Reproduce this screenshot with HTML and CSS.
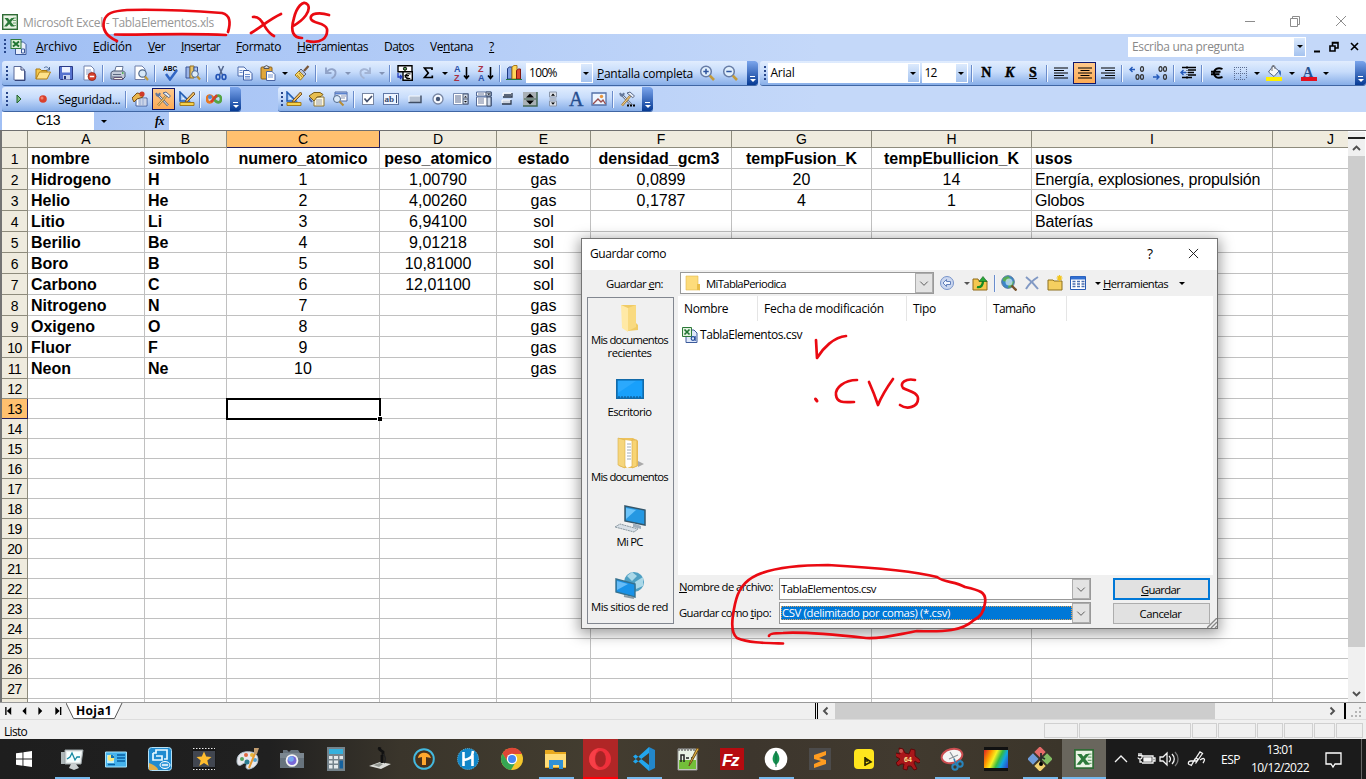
FILE: index.html
```html
<!DOCTYPE html>
<html lang="es">
<head>
<meta charset="utf-8">
<title>Microsoft Excel - TablaElementos.xls</title>
<link rel="stylesheet" href="styles.css">
</head>
<body>
<svg class="defs" width="0" height="0">
  <symbol id="excel" viewBox="0 0 16 16"><rect x=".7" y=".7" width="14.6" height="14.6" fill="#e9f3e4" stroke="#2f6b35" stroke-width="1.4"/><path d="M11 4h3M11 6.500h3M11 9h3M11 11.500h3" stroke="#6fa873"/><path d="M2.500 4h3.500l1.500 2L9.500 4h3L9 8l3.700 4.500H9L7.200 10l-2.200 2.500H2l3.700-4.500z" fill="#2c7a3a"/></symbol>
  <symbol id="book" viewBox="0 0 16 16"><path d="M5 3h8l2.500 2.500V15.500H5z" fill="#e8eefc" stroke="#3c5a9a"/><path d="M11 10h3v4h-3z" fill="none" stroke="#3c5a9a"/><rect x=".5" y=".5" width="10" height="9" fill="#d9ecd5" stroke="#2f7a3a"/><path d="M2.500 2.500l6 5M8.500 2.500l-6 5" stroke="#1e7430" stroke-width="1.900"/></symbol>
  <symbol id="new" viewBox="0 0 16 16"><path d="M3 1.500h7l3.500 3.500V15H3z" fill="#fff" stroke="#5a6a9a"/><path d="M10 1.500V5h3.500M4 15.500h10V6" fill="none" stroke="#35457a"/></symbol>
  <symbol id="open" viewBox="0 0 16 16"><path d="M1 14V4h4l1.500 1.500H12V8" fill="#f5c84c" stroke="#a97812"/><path d="M1 14l3.500-7H15.500L12 14z" fill="#ffe28a" stroke="#b07e14"/><path d="M9 3c2-2 4-1 5 1.500M14.500 2v3h-3" fill="none" stroke="#4c6894"/></symbol>
  <symbol id="save" viewBox="0 0 16 16"><path d="M1.500 1.500h13v13h-12l-1-1z" fill="#5672ce" stroke="#2a3b87"/><path d="M4 2h8v5.500H4z" fill="#edf2ff"/><path d="M5 10h7v4.500H5z" fill="#c9d4ee"/><path d="M6 11h2v3H6z" fill="#233477"/></symbol>
  <symbol id="perm" viewBox="0 0 16 16"><path d="M3 1h7l3 3v11H3z" fill="#fff" stroke="#7383ad"/><path d="M5 5h5M5 7h6M5 9h3" stroke="#8fa0c8"/><circle cx="11" cy="11.500" r="4" fill="#d5412c" stroke="#8d1d12" stroke-width=".7"/><path d="M8.800 11.500h4.400" stroke="#fff" stroke-width="1.500"/></symbol>
  <symbol id="print" viewBox="0 0 16 16"><path d="M4.500 7L6 1.500h7L12 7" fill="#fff" stroke="#66789b"/><path d="M1 7.500l2-1.500h10.500l1.500 1.500V12l-2 2H1z" fill="#c4cbd9" stroke="#46546e"/><path d="M3 9.500h8M2 12h10" stroke="#5a6780"/><path d="M4 12.500h8l1 2H3.500z" fill="#f1f1e2" stroke="#657"/><path d="M12 8h1.500" stroke="#3a3" stroke-width="1.500"/></symbol>
  <symbol id="preview" viewBox="0 0 16 16"><path d="M2 1h7l3 3v10.500H2z" fill="#fff" stroke="#6f80aa"/><circle cx="9.500" cy="8.500" r="3.700" fill="#d6e8f8" stroke="#536b8e" stroke-width="1.200"/><path d="M12 11.500l3 3.500" stroke="#c09a3a" stroke-width="2.200"/></symbol>
  <symbol id="spell" viewBox="0 0 16 16"><path d="M4 9l4 5.500 7-9.500" fill="none" stroke="#3166c4" stroke-width="2.500"/></symbol>
  <symbol id="research" viewBox="0 0 16 16"><path d="M1 2h4v11H1z" fill="#9ab4e8" stroke="#3b5596"/><path d="M5 1h4v12H5z" fill="#e6c56a" stroke="#937126"/><path d="M9 2h3.500v8H9z" fill="#a9c4f2" stroke="#3b5596"/><circle cx="10" cy="9" r="3.300" fill="#dcebfa" stroke="#4c668e"/><path d="M12.300 11.500l2.700 3" stroke="#be9030" stroke-width="2.200"/></symbol>
  <symbol id="cut" viewBox="0 0 16 16"><path d="M5.500 1l4 9M10.500 1l-4 9" stroke="#52658c" stroke-width="1.500"/><ellipse cx="5" cy="12" rx="1.900" ry="2.500" fill="none" stroke="#2353b4" stroke-width="1.600"/><ellipse cx="11" cy="12" rx="1.900" ry="2.500" fill="none" stroke="#2353b4" stroke-width="1.600"/></symbol>
  <symbol id="copy" viewBox="0 0 16 16"><path d="M1 2h6l2.500 2.500V11H1z" fill="#f4f8ff" stroke="#4f6dac"/><path d="M6.500 5.500H12l3 3V15H6.500z" fill="#f4f8ff" stroke="#3c5da4"/><path d="M2.500 5.500h3M2.500 7.500h3M8 9.500h5M8 11.500h5M8 13h5" stroke="#6f90d0"/></symbol>
  <symbol id="paste" viewBox="0 0 16 16"><rect x="1" y="2" width="11" height="12" rx="1" fill="#e0a63a" stroke="#8b611a"/><path d="M4 3.500V2L6.500.5 9 2v1.500z" fill="#cfd6e4" stroke="#555"/><path d="M6.500 6.500H12l3 3V15.500H6.500z" fill="#fff" stroke="#4b66a4"/><path d="M8 10h5M8 12h5" stroke="#7795d2"/></symbol>
  <symbol id="brush" viewBox="0 0 16 16"><path d="M14.500 1L10 6" stroke="#7a5738" stroke-width="2.200"/><path d="M7 4l5 5-2 2-5-5z" fill="#b9c3da" stroke="#566384"/><path d="M5 6l5 5-3.500 4L1 10z" fill="#f6d669" stroke="#9d7820"/><path d="M3 10l3 3M5 8l3 4" stroke="#b98e2c"/></symbol>
  <symbol id="undo" viewBox="0 0 16 16"><path d="M3 2.500V8h5.500M3.500 7.500C7 2 13 4 12.500 8.500 12.300 11 10.500 12.500 8.500 13.500" fill="none" stroke="#91a3c8" stroke-width="1.900"/></symbol>
  <symbol id="redo" viewBox="0 0 16 16"><path d="M13 2.500V8H7.500M12.500 7.500C9 2 3 4 3.500 8.500 3.700 11 5.500 12.500 7.500 13.500" fill="none" stroke="#a3b4d4" stroke-width="1.900"/></symbol>
  <symbol id="euroconv" viewBox="0 0 16 16"><path d="M1 .7h14v6H1zM6 6.700h9.300v8.600H6z" fill="#fff" stroke="#000" stroke-width="1.400"/><circle cx="8" cy="3.700" r="1.600" fill="#5fa457" stroke="#000"/><path d="M13.500 9c-4-1-5 1-5 2.300s1.500 3 4.800 2M7.500 10.500h4.500M7.500 12h4" fill="none" stroke="#000" stroke-width="1.200"/><path d="M1 8v4h3M3 10l2 2-2 2" fill="none" stroke="#2039bd" stroke-width="1.300"/></symbol>
  <symbol id="sigma" viewBox="0 0 16 16"><path d="M12 5V3H4.500L8.300 8 4.500 12.500h7.800V10.500" fill="none" stroke="#000" stroke-width="1.700"/></symbol>
  <symbol id="downarrow" viewBox="0 0 16 16"><path d="M12.500 2v11M10 10.500l2.500 3 2.500-3" fill="none" stroke="#000" stroke-width="1.600"/></symbol>
  <symbol id="chart" viewBox="0 0 16 16"><path d="M1.500 3.500l2-1.500h2.500v12H1.500z" fill="#7f9fe2" stroke="#1c3a83"/><path d="M6 2l2-1.500h3V14H6z" fill="#ffd75a" stroke="#a9781a"/><path d="M10.500 5.500l2-1.500h2V14h-4z" fill="#dd4930" stroke="#82180e"/><path d="M0 14.500h16" stroke="#274" stroke-width="1"/></symbol>
  <symbol id="zoomin" viewBox="0 0 16 16"><circle cx="7" cy="6.500" r="5.300" fill="#e1effc" stroke="#687da6" stroke-width="1.500"/><path d="M4.300 6.500h5.400M7 3.800v5.400" stroke="#2e549e" stroke-width="1.500"/><path d="M10.800 10.600L15 15" stroke="#c39b3c" stroke-width="2.600"/></symbol>
  <symbol id="zoomout" viewBox="0 0 16 16"><circle cx="7" cy="6.500" r="5.300" fill="#e1effc" stroke="#687da6" stroke-width="1.500"/><path d="M4.300 6.500h5.400" stroke="#2e549e" stroke-width="1.500"/><path d="M10.800 10.600L15 15" stroke="#c39b3c" stroke-width="2.600"/></symbol>
  <symbol id="left" viewBox="0 0 16 16"><path d="M1 3h14M1 5.500h10M1 8h14M1 10.500h10M1 13h14" stroke="#000" stroke-width="1.200"/></symbol>
  <symbol id="center" viewBox="0 0 16 16"><path d="M1 3h14M3.500 5.500h9M1 8h14M3.500 10.500h9M1 13h14" stroke="#000" stroke-width="1.200"/></symbol>
  <symbol id="right" viewBox="0 0 16 16"><path d="M1 3h14M5 5.500h10M1 8h14M5 10.500h10M1 13h14" stroke="#000" stroke-width="1.200"/></symbol>
  <symbol id="decinc" viewBox="0 0 16 16"><path d="M1 4.500h5M3.500 2L1 4.500 3.500 7" fill="none" stroke="#2359ba" stroke-width="1.400"/><g fill="none" stroke="#333" stroke-width="1.200"><ellipse cx="13" cy="4" rx="1.500" ry="2.300"/><ellipse cx="8.500" cy="12" rx="1.500" ry="2.300"/><ellipse cx="13" cy="12" rx="1.500" ry="2.300"/></g></symbol>
  <symbol id="decdec" viewBox="0 0 16 16"><path d="M1 12h6M4.500 9.500L7 12l-2.500 2.500" fill="none" stroke="#2359ba" stroke-width="1.400"/><g fill="none" stroke="#333" stroke-width="1.200"><ellipse cx="8.500" cy="4" rx="1.500" ry="2.300"/><ellipse cx="13" cy="4" rx="1.500" ry="2.300"/><ellipse cx="13" cy="12" rx="1.500" ry="2.300"/></g></symbol>
  <symbol id="indent" viewBox="0 0 16 16"><path d="M2 2.500h14M8 5h8M8 7.500h6M8 10h8M2 12.500h10" stroke="#000" stroke-width="1.400"/><path d="M1 7.500h5M3.500 5L1 7.500 3.500 10" fill="none" stroke="#2359ba" stroke-width="1.400"/><path d="M7 1v14" stroke="#222" stroke-dasharray="1 1"/></symbol>
  <symbol id="euro" viewBox="0 0 16 16"><path d="M13.500 4C8.500 1.800 5 4.500 5 8s3 6 8.500 4M2 6.800h9.500M2 9.300h8.500" fill="none" stroke="#000" stroke-width="1.900"/></symbol>
  <symbol id="borders" viewBox="0 0 16 16"><path d="M2 2.500h12M2 8.500h12M2 14.500h12M2.500 2v12M8.500 2v12M14.500 2v12" stroke="#5b6c90" stroke-dasharray="1 1"/></symbol>
  <symbol id="fill" viewBox="0 0 16 16"><path d="M7 1l6 5-5 5.500L2.500 7z" fill="#f4f6fb" stroke="#536282"/><path d="M6 6V1.500C6 0 9 0 9 2v2" fill="none" stroke="#777"/><path d="M12.500 5c3 0 3 3 2 6-1-2-2-3-2-6" fill="#3b6dbb"/><path d="M0 12h16v4H0z" fill="#ffef00"/></symbol>
  <symbol id="fontcolor" viewBox="0 0 16 16"><path d="M0 12h16v4H0z" fill="#e3101e"/></symbol>
  <symbol id="sec" viewBox="0 0 16 16"><path d="M4 7h11v8H4z" fill="#fff" stroke="#4662a0"/><path d="M6 9h8M6 11h8M6 13h8M8 8v7M11 8v7" stroke="#97abd2"/><path d="M0 7l5-5 5 1 1 3-6 2-3 3z" fill="#e9b64e" stroke="#785018"/><circle cx="10" cy="3" r="2.600" fill="#cf3a28"/></symbol>
  <symbol id="tools" viewBox="0 0 16 16"><path d="M3.500 4.500l9.500 10" stroke="#546481" stroke-width="2.400"/><path d="M3.500 4.500l9.500 10" stroke="#eef3fa"/><path d="M1 2l2 2 2-2M1 2c0 4 4 4 4 0" fill="none" stroke="#66799b" stroke-width="1.300"/><path d="M12 4L3 14.500" stroke="#a87c34" stroke-width="2.400"/><path d="M12 4L3 14.500" stroke="#f6d898"/><path d="M8 2l3-1 4.500 4-1.700 1.700L11 4.500z" fill="#e8edf5" stroke="#58698b"/></symbol>
  <symbol id="design" viewBox="0 0 16 16"><path d="M1 1l9 9H1z" fill="#a9cbf4" stroke="#205bb2" stroke-width="1.500"/><path d="M3.500 6v2h2z" fill="#fff"/><path d="M14.500 1L7 9l-1 2.500 2.500-1L16 3z" fill="#edbd60" stroke="#745022"/><path d="M1 11.500h14v3H1z" fill="#f6d24c" stroke="#a27a1d"/></symbol>
  <symbol id="script" viewBox="0 0 16 16"><path d="M8 8C5 3 1 4 1 8s4 5 7 0" fill="none" stroke="#e77621" stroke-width="2.700"/><path d="M8 8c3 5 7 4 7 0s-4-5-7 0" fill="none" stroke="#55a444" stroke-width="2.700"/><path d="M5 11l6-7" stroke="#d83d2c" stroke-width="2.500"/><circle cx="4" cy="6" r="2" fill="#4b88da"/></symbol>
  <symbol id="props" viewBox="0 0 16 16"><path d="M5 6h10v9H5z" fill="#fff8d9" stroke="#8c7534"/><path d="M7 9h6M7 11h6M7 13h6" stroke="#9aa2b8"/><path d="M0 5l5-3.500h6l3 2-2 2-4 .5-3 4z" fill="#e7be50" stroke="#785c19"/><path d="M0 7l3 4" stroke="#4a66a8" stroke-width="2"/></symbol>
  <symbol id="viewcode" viewBox="0 0 16 16"><path d="M3 1h12v9H3z" fill="#fff" stroke="#5169a0"/><path d="M3 2.500h12" stroke="#5b82ce" stroke-width="2"/><path d="M9 5h5M9 7h4" stroke="#8b96b4"/><circle cx="5" cy="8" r="3.500" fill="#dcebfa" stroke="#50698c"/><path d="M7.500 10.500l4 4" stroke="#b88d35" stroke-width="2"/></symbol>
  <symbol id="check" viewBox="0 0 16 16"><rect x="2.500" y="2.500" width="11" height="11" fill="#fff" stroke="#7786a3"/><path d="M4.500 7.500l2.500 3L12 5" fill="none" stroke="#44516e" stroke-width="1.700"/></symbol>
  <symbol id="field" viewBox="0 0 16 16"><rect x=".5" y="2.500" width="15" height="11" fill="#edf4ff" stroke="#6078a7"/><path d="M13.500 4v8" stroke="#35496f"/></symbol>
  <symbol id="button" viewBox="0 0 16 16"><rect x="2" y="5" width="12" height="6.500" fill="#b7c2d2"/><path d="M14 4.500V11.500H1.500" fill="none" stroke="#3f4d64" stroke-width="1.400"/><path d="M2 11V5h11" fill="none" stroke="#f8fbff"/></symbol>
  <symbol id="radio" viewBox="0 0 16 16"><circle cx="8" cy="8" r="5" fill="#f7faff" stroke="#7786a3" stroke-width="1.300"/><circle cx="8" cy="8" r="2.200" fill="#445574"/></symbol>
  <symbol id="listbox" viewBox="0 0 16 16"><path d="M.5 2.500h15v11H.5z" fill="#fff" stroke="#7a8fb6"/><path d="M2 5h6M2 7h6M2 9h6M2 11h6" stroke="#55678d"/><path d="M10 3h5v10h-5zM10 8h5" fill="#d3dcea" stroke="#4d5d79"/><path d="M11 6.500h3L12.500 5zM11 10h3l-1.500 1.500z" fill="#000"/></symbol>
  <symbol id="combo" viewBox="0 0 16 16"><path d="M.5 1h15v4H.5zM.5 6h15v9H.5z" fill="#fff" stroke="#526a99"/><path d="M2 3h6M2 8h6M2 10h6M2 12h6" stroke="#6e7d9e"/><path d="M10 1h5v4h-5zM11 6h4v9h-4z" fill="#d0daea" stroke="#44546e"/><path d="M11 2.500h3.500L12.800 4z" fill="#000"/></symbol>
  <symbol id="toggle" viewBox="0 0 16 16"><path d="M4 2h9v4H4zM3 9h9v4H3z" fill="#cbd3df"/><path d="M4 5V2h9M3 12V9h9" fill="none" stroke="#fff"/><path d="M13 2v4H4M12 9v4H3" fill="none" stroke="#2d384b" stroke-width="1.300"/><path d="M5 3h7v2H5z" fill="#59667a"/></symbol>
  <symbol id="spin" viewBox="0 0 16 16"><path d="M1 1h14v14H1z" fill="#a9b0b5"/><path d="M15 1v14H1" fill="none" stroke="#465" stroke-width="1.500"/><path d="M2 8h12" stroke="#465" stroke-width="1.200"/><path d="M4 6.500h8L8 2.500zM4 9.500h8l-4 4z"/></symbol>
  <symbol id="scroll" viewBox="0 0 16 16"><path d="M4.500 1h7v5h-7zM4.500 10h7v5h-7z" fill="#dbe0e8" stroke="#8a96aa"/><path d="M4.500 6.500h7v3h-7z" fill="#b2bccb"/><path d="M6 4.800h4L8 2.500zM6 11.500h4l-2 2.300z"/></symbol>
  <symbol id="image" viewBox="0 0 16 16"><path d="M1 2h14v12H1z" fill="#edf5ff" stroke="#5370a8" stroke-width="1.300"/><circle cx="10.500" cy="5.500" r="1.700" fill="#e8963f"/><path d="M2 13l5-5 3 3 2-2 2.500 4" fill="none" stroke="#994b4b" stroke-width="1.300"/></symbol>
  <symbol id="folder" viewBox="0 0 28 28"><path d="M5 1h15v18l2 2v5l-10 1z" fill="#f0cb66"/><path d="M5 1l7 3v24l-6-4z" fill="#ffe9a6"/><path d="M12 4l8-3v22l-8 4z" fill="#f9da80"/></symbol>
  <symbol id="smallfolder" viewBox="0 0 16 16"><path d="M1 1h12v13l2 1H1z" fill="#fddc7b" stroke="#e3b94d" stroke-width=".6"/><path d="M12 9h3v6h-3z" fill="#e8bd49"/></symbol>
  <symbol id="desktop" viewBox="0 0 28 20"><path d="M.8.800h26.400v18.400H.8z" fill="#18a0fb" stroke="#126aa9" stroke-width="1.600"/><path d="M2 14L20 2H2z" fill="#3db2ff" opacity=".5"/><path d="M2 18h24" stroke="#0b4f82" stroke-dasharray="2 1"/></symbol>
  <symbol id="docs" viewBox="0 0 28 32"><path d="M3 1h14l5 3v25l-5 2H8l-5-2z" fill="#edc25d"/><path d="M9 3l7 1v25l-5 2-3-4z" fill="#fff"/><path d="M11 7h4M11 10h4M11 13h4M11 16h4M11 19h4M11 22h4" stroke="#a1aeb9"/><path d="M2 1l7 2v28l-7-3z" fill="#f6d67c" stroke="#d9ae4a" stroke-width=".6"/><path d="M16 3h5v26l-5 2z" fill="#f8d473" stroke="#dbad47" stroke-width=".7"/><path d="M22 24l6 3-6 3z" fill="#aaa"/></symbol>
  <symbol id="pc" viewBox="0 0 32 28"><path d="M11 1l20 4v15l-20-4z" fill="#2598e2" stroke="#35576b" stroke-width="1.500"/><path d="M12 3l10 2-10 9z" fill="#6cc4fa"/><path d="M19 18v4l8 2v-3" fill="#a0afbc"/><path d="M1 22l5-3 18 5-4 3z" fill="#d8e0e7" stroke="#8997a0" stroke-dasharray="2 .6"/></symbol>
  <symbol id="net" viewBox="0 0 30 28"><circle cx="19" cy="11" r="10" fill="#4e9fc2"/><path d="M12 5l5-4 5 4-5 5zM20 11l8-5v9l-7 3z" fill="#aad8e8"/><path d="M1 8l19 5v13L1 21z" fill="#1992e8" stroke="#35718f" stroke-width="1.400"/><path d="M2 10l11 3L2 19z" fill="#67bcf7"/><path d="M9 25l10 2" stroke="#8a9ba5" stroke-width="2"/></symbol>
  <symbol id="back" viewBox="0 0 16 16"><circle cx="8" cy="8" r="6.500" fill="#cbd7ef" stroke="#7894ca"/><path d="M4 8L7.500 4.500v2H11.500v3H7.500v2z" fill="#f2f6ff" stroke="#6280bb"/></symbol>
  <symbol id="up" viewBox="0 0 16 16"><path d="M1 4h5l1 2h8v9H1z" fill="#f4c84e" stroke="#8f6b18"/><path d="M5 12c4 1 6-2 6-6" fill="none" stroke="#138c24" stroke-width="2.300"/><path d="M7 6.500l4-5 4 5z" fill="#28a838" stroke="#115f1d" stroke-width=".6"/></symbol>
  <symbol id="websearch" viewBox="0 0 16 16"><circle cx="7" cy="7" r="6.300" fill="#3c87c9" stroke="#52759c"/><path d="M2 3l5-2 3 3-4 3-4-1zM8 8l5-2-2 6-4 1z" fill="#57ad55"/><circle cx="8" cy="7" r="3.500" fill="#c3e0f1" opacity=".8"/><path d="M10.500 10.500l5 5" stroke="#76522c" stroke-width="2.400"/></symbol>
  <symbol id="delete" viewBox="0 0 16 16"><path d="M2 2c4 3 8 7 12 12M14 2C9 5 5 9 2 14" fill="none" stroke="#8199c4" stroke-width="2"/></symbol>
  <symbol id="newfolder" viewBox="0 0 16 16"><path d="M1 5h5l1 1h8v9H1z" fill="#f5cf60" stroke="#8d701e"/><path d="M12.500 0v6M9.500 3h6M10.500 1l4 4M14.500 1l-4 4" stroke="#f2c51c" stroke-width="1.200"/></symbol>
  <symbol id="views" viewBox="0 0 16 16"><path d="M.5 1.500h15v13H.5z" fill="#fff" stroke="#275bb4"/><path d="M1 3h14" stroke="#3270d2" stroke-width="3"/><path d="M2.500 6.500h3m1.500 0h3m1.500 0h3M2.500 9h3m1.500 0h3m1.500 0h3M2.500 11.500h3m1.500 0h3m1.500 0h3" stroke="#496eae" stroke-width="1.400"/></symbol>
  <symbol id="csv" viewBox="0 0 16 16"><path d="M6 3h6l3 3v9.500H4V9" fill="#dfe8fa" stroke="#3c5b9b"/><path d="M.5.500h9v9h-9z" fill="#e1f1df" stroke="#2d7938"/><path d="M2.500 2.500l5 5M7.500 2.500l-5 5" stroke="#217533" stroke-width="1.700"/><circle cx="11" cy="11.500" r="1.800" fill="none" stroke="#234b9a" stroke-width="1.200"/><path d="M13.200 9v5" stroke="#234b9a"/></symbol>
</svg>

<div class="window">
  <header class="titlebar">
    <svg class="i16"><use href="#excel"/></svg>
    <span class="title fit" data-w="191">Microsoft Excel - TablaElementos.xls</span>
    <svg class="winbtns" viewBox="0 0 104 14"><path d="M1 7.500h10M46.500 12.500v-8h7v8zM48.500 4V2.500h7v8H54M92 2l10 10M102 2L92 12" fill="none" stroke="#8c8c8c"/></svg>
  </header>

  <nav class="menubar">
    <i class="grip"></i><svg class="appicon"><use href="#book"/></svg>
    <span class="fit" data-w="41"><u>A</u>rchivo</span><span class="fit" data-w="39"><u>E</u>dición</span><span class="fit" data-w="17"><u>V</u>er</span><span class="fit" data-w="39"><u>I</u>nsertar</span><span class="fit" data-w="45"><u>F</u>ormato</span><span class="fit" data-w="71"><u>H</u>erramientas</span><span class="fit" data-w="30">Da<u>t</u>os</span><span class="fit" data-w="43">Ve<u>n</u>tana</span><span><u>?</u></span>
    <div class="ask"><span class="fit" data-w="112">Escriba una pregunta</span><i class="drop"></i></div>
    <svg class="mdi" viewBox="0 0 46 12"><path d="M1 10.500h6" stroke="#000" stroke-width="2"/><path d="M17 5h5v5h-5zM19.500 5V1.500H25V7h-2.500M17 5h5.500M19 2h6M38 2l7 7M45 2l-7 7" fill="none" stroke="#000" stroke-width="1.600"/></svg>
  </nav>

  <div class="bars">
    <div class="toolbar std">
      <i class="grip"></i>
      <b class="ib"><svg><use href="#new"/></svg></b><b class="ib"><svg><use href="#open"/></svg></b><b class="ib"><svg><use href="#save"/></svg></b><b class="ib"><svg><use href="#perm"/></svg></b><i class="sep"></i>
      <b class="ib"><svg><use href="#print"/></svg></b><b class="ib"><svg><use href="#preview"/></svg></b><i class="sep"></i>
      <b class="ib"><svg viewBox="0 0 16 16"><text x="1" y="6" class="abc">ABC</text><use href="#spell"/></svg></b><b class="ib"><svg><use href="#research"/></svg></b><i class="sep"></i>
      <b class="ib"><svg><use href="#cut"/></svg></b><b class="ib"><svg><use href="#copy"/></svg></b><b class="ib"><svg><use href="#paste"/></svg></b><i class="ar"></i><b class="ib"><svg><use href="#brush"/></svg></b><i class="sep"></i>
      <b class="ib"><svg><use href="#undo"/></svg></b><i class="ar dim"></i><b class="ib"><svg><use href="#redo"/></svg></b><i class="ar dim"></i><i class="sep"></i>
      <b class="ib"><svg><use href="#euroconv"/></svg></b><b class="ib"><svg><use href="#sigma"/></svg></b><i class="ar"></i>
      <b class="ib"><svg viewBox="0 0 16 16"><text x="0" y="7" class="az blue">A</text><text x="0" y="16" class="az red">Z</text><use href="#downarrow"/></svg></b><b class="ib"><svg viewBox="0 0 16 16"><text x="0" y="7" class="az red">Z</text><text x="0" y="16" class="az blue">A</text><use href="#downarrow"/></svg></b><i class="sep"></i>
      <b class="ib"><svg><use href="#chart"/></svg></b>
      <div class="combo zoom"><span class="fit" data-w="28">100%</span><i class="drop"></i></div>
      <span class="full fit" data-w="96"><u>P</u>antalla completa</span>
      <b class="ib"><svg><use href="#zoomin"/></svg></b><b class="ib"><svg><use href="#zoomout"/></svg></b><i class="more"></i>
    </div>
    <div class="toolbar fmt">
      <i class="grip"></i>
      <div class="combo face"><span class="fit" data-w="24">Arial</span><i class="drop"></i></div>
      <div class="combo size"><span class="fit" data-w="12">12</span><i class="drop"></i></div><i class="sep"></i>
      <b class="ib ltr">N</b><b class="ib ltr it">K</b><b class="ib ltr un">S</b><i class="sep"></i>
      <b class="ib"><svg><use href="#left"/></svg></b><b class="ib on"><svg><use href="#center"/></svg></b><b class="ib"><svg><use href="#right"/></svg></b><i class="sep"></i>
      <b class="ib"><svg><use href="#decinc"/></svg></b><b class="ib"><svg><use href="#decdec"/></svg></b><i class="sep"></i>
      <b class="ib"><svg><use href="#indent"/></svg></b><i class="sep"></i>
      <b class="ib"><svg><use href="#euro"/></svg></b><b class="ib"><svg><use href="#borders"/></svg></b><i class="ar"></i><b class="ib"><svg><use href="#fill"/></svg></b><i class="ar"></i><b class="ib"><svg viewBox="0 0 16 16"><text x="2" y="12" class="fc">A</text><use href="#fontcolor"/></svg></b><i class="ar"></i><i class="more end"></i>
    </div>
  </div>
  <div class="bars">
    <div class="toolbar vb">
      <i class="grip"></i>
      <b class="ib"><svg viewBox="0 0 16 16"><path d="M6 4v8L10 8z" fill="#7fbf84" stroke="#23622b"/></svg></b><b class="ib"><svg viewBox="0 0 16 16"><circle cx="8" cy="8" r="3.800" fill="#d9402c"/><circle cx="7" cy="7" r="1.500" fill="#f2836f"/></svg></b>
      <span class="seg fit" data-w="62">Seguridad...</span><i class="sep"></i>
      <b class="ib"><svg><use href="#sec"/></svg></b><b class="ib on"><svg><use href="#tools"/></svg></b><b class="ib"><svg><use href="#design"/></svg></b><i class="sep"></i><b class="ib"><svg><use href="#script"/></svg></b><i class="more"></i>
    </div>
    <div class="toolbar ctl">
      <i class="grip"></i>
      <b class="ib"><svg><use href="#design"/></svg></b><b class="ib"><svg><use href="#props"/></svg></b><b class="ib"><svg><use href="#viewcode"/></svg></b><i class="sep"></i>
      <b class="ib"><svg><use href="#check"/></svg></b><b class="ib"><svg viewBox="0 0 16 16"><use href="#field"/><text x="1.500" y="11" class="ab">ab</text></svg></b><b class="ib"><svg><use href="#button"/></svg></b><b class="ib"><svg><use href="#radio"/></svg></b><b class="ib"><svg><use href="#listbox"/></svg></b><b class="ib"><svg><use href="#combo"/></svg></b><b class="ib"><svg><use href="#toggle"/></svg></b><b class="ib"><svg><use href="#spin"/></svg></b><b class="ib"><svg><use href="#scroll"/></svg></b><b class="ib biga">A</b><b class="ib"><svg><use href="#image"/></svg></b><i class="sep"></i>
      <b class="ib"><svg viewBox="0 0 16 16"><use href="#tools"/><path d="M8 14.500h8" stroke="#000" stroke-width="2" stroke-dasharray="2 1"/></svg></b><i class="more"></i>
    </div>
  </div>

  <div class="formula"><span class="namebox">C13</span><i class="ar"></i><em class="fx">fx</em><span class="input"></span></div>

  <div class="sheetarea">
    <div class="sheet" id="sheet"></div>
    <div class="vscroll"><i class="split"></i><svg class="sb" viewBox="0 0 17 17"><path d="M5 11l3.500-3.500L12 11" fill="none" stroke="#505050" stroke-width="1.900"/></svg><i class="thumb"></i><svg class="sb last" viewBox="0 0 17 17"><path d="M5 7L8.500 10.500 12 7" fill="none" stroke="#505050" stroke-width="1.900"/></svg></div>
  </div>

  <div class="tabs">
    <svg class="nav" viewBox="0 0 66 16"><path d="M4 4v8M60.500 4v8" stroke="#000" stroke-width="1.400"/><path d="M9.500 4v8L5 8zM25 4v8l-4-4zM37.500 4v8l4-4zM55 4v8l4.500-4z"/></svg>
    <div class="tab"><svg viewBox="0 0 58 16"><path d="M0 0l7.500 15.500h41L56 0" fill="#fff" stroke="#555"/></svg><b class="fit" data-w="36">Hoja1</b></div>
    <div class="hscroll"><svg viewBox="0 0 16 16"><path d="M9.500 4.500L6 8l3.500 3.500" fill="none" stroke="#505050" stroke-width="1.900"/></svg><i class="hthumb"></i><svg class="hend" viewBox="0 0 16 16"><path d="M6.500 4.500L10 8l-3.500 3.500" fill="none" stroke="#505050" stroke-width="1.900"/></svg></div>
    <svg class="grab" viewBox="0 0 16 16"><path d="M13 5h2M13 9h2M9 9h2M13 13h2M9 13h2M5 13h2" stroke="#b5b5b5" stroke-width="2"/></svg>
  </div>
  <div class="status"><span class="fit" data-w="23">Listo</span><div class="panes"><i class="p34"></i><i class="p112"></i><i class="p25"></i><i class="p38"></i><i class="p26"></i><i class="p29"></i><i class="p21"></i><i class="p27"></i></div></div>

  <footer class="taskbar">
    <span class="start"><svg viewBox="0 0 16 16"><path d="M0 2.300L6.500 1.400V7.600H0zM7.400 1.300L16 0V7.600H7.400zM0 8.500h6.500v6.200L0 13.700zM7.400 8.500H16V16L7.400 14.800z" fill="#fff"/></svg></span>
    <span class="tk run"><svg viewBox="0 0 24 24"><path d="M1 5h14v12H1z" fill="#aeb6b8"/><path d="M5 3h18l-2 14H5z" fill="#e8ecec" stroke="#9ba4a7"/><path d="M7 5h14l-1.500 10H7z" fill="#f7ffff"/><path d="M7 12l3-2 2-4 3 7 2-3h3" fill="none" stroke="#1588a2" stroke-width="1.300"/><path d="M11 17l5 0 3 4-5 2-5-2z" fill="#cbd0d1"/></svg></span>
    <span class="tk"><svg viewBox="0 0 24 24"><path d="M1.500 5h21v15h-21z" fill="#45b3ed" stroke="#a7e2fa"/><path d="M3 8h7v8H3z" fill="#b9ecff"/><circle cx="7" cy="11" r="3.300" fill="#f9e97d"/><path d="M7 7.700V11h3.300A3.300 3.300 0 0 0 7 7.700" fill="#086fba"/><path d="M13 8h8M13 11h8M13 14h8M4 17.500h7" stroke="#075fa3" stroke-width="1.500"/></svg></span>
    <span class="tk"><svg viewBox="0 0 24 24"><rect x=".5" y=".5" width="23" height="23" rx="3" fill="#208bd0" stroke="#b5e0f6"/><path d="M5 6h3V3h11v9h-3M5 6v7h9V9H8" fill="none" stroke="#eafaff" stroke-width="1.700"/><path d="M1 16c7 3 9 5 9 7H1z" fill="#e2ae48"/><ellipse cx="17" cy="18" rx="5" ry="3.500" fill="#3c9ddb" stroke="#fff"/><path d="M14 18h6" stroke="#fff" stroke-width="1.500"/></svg></span>
    <span class="tk"><svg viewBox="0 0 24 24"><path d="M.5 1h23v22H.5z" fill="#171717"/><path d="M1 1.500h22M1 22.500h22" stroke="#eee" stroke-width="1" stroke-dasharray="1.500 1.500"/><path d="M1 4h22v16H1z" fill="#414650"/><path d="M12 4.500l2.200 5.100 5.300.4-4.200 3.600 1.400 5.400-4.700-2.900L7.300 19l1.400-5.400L4.500 10l5.300-.4z" fill="#ffbd2f"/></svg></span>
    <span class="tk"><svg viewBox="0 0 24 24"><path d="M1 14C1 6 8 4 15 5c9 1 9 13 1 16-6 3-7-1-5-4 1-3-3-1-6 1-2 1-4 0-4-4" fill="#e8e8ed" stroke="#b4c4ce"/><circle cx="6" cy="12" r="2" fill="#57a35c"/><circle cx="10" cy="8" r="2" fill="#df6a42"/><circle cx="16" cy="8" r="2" fill="#e5b73e"/><circle cx="19" cy="13" r="2" fill="#52a1d0"/><circle cx="11" cy="15" r="2.500" fill="#287c91"/><path d="M20 4l-7 17" stroke="#e49a31" stroke-width="2"/><path d="M18 1l5 0-2 6h-3z" fill="#c29d70"/></svg></span>
    <span class="tk"><svg viewBox="0 0 24 24"><path d="M0 6h3V3h4l2 2 2-2h7l2 3h4v15H0z" fill="#67737d"/><path d="M0 6h24v5H0z" fill="#7b8790"/><circle cx="12" cy="13.500" r="6.300" fill="#f5f5f5"/><circle cx="12" cy="13.500" r="4.500" fill="#7868d8"/><circle cx="11" cy="12" r="2.800" fill="#76a9ef"/></svg></span>
    <span class="tk"><svg viewBox="0 0 24 24"><path d="M3 0h18v24H3z" fill="#75838b"/><path d="M5 2h14v5H5z" fill="#35b0dc"/><path d="M5 9h3.500v3H5zM10 9h4v3h-4zM15.500 9H19v3h-3.500zM5 13.500h3.500v3H5zM10 13.500h4v3h-4zM5 18h3.500v3.500H5zM10 18h4v3.500h-4z" fill="#e4e9eb"/><path d="M15.500 13.500H19v8h-3.500z" fill="#16629e"/></svg></span>
    <span class="tk"><svg viewBox="0 0 24 24"><path d="M1 19l11-4 11 2-10 5z" fill="#dddeda"/><path d="M5 18l7-2 3 1-4 3z" fill="#929690"/><path d="M14 16V8M11 2l4 3v4M10 1l3 1" fill="none" stroke="#111" stroke-width="2.800"/><path d="M15 7c3 3 3 6 1 9" fill="none" stroke="#222" stroke-width="1.500"/></svg></span>
    <span class="tk"><svg viewBox="0 0 24 24"><circle cx="12" cy="12" r="9.800" fill="#49311b" stroke="#43b9df" stroke-width="2"/><path d="M6 11c1-7 11-7 13 0l-5-1v8h-4v-8z" fill="#ffa72d"/></svg></span>
    <span class="tk"><svg viewBox="0 0 24 24"><circle cx="12" cy="12" r="10.500" fill="#1286c8" stroke="#5ac1ed" stroke-dasharray="1 1"/><path d="M7.500 5v14M16.500 8v11M7 13c2 0 7-1 9-4l1-5" fill="none" stroke="#fff" stroke-width="2.600"/></svg></span>
    <span class="tk"><svg viewBox="0 0 24 24"><circle cx="12" cy="12" r="11" fill="#f3c62d"/><path d="M2.500 6.500A11 11 0 0 1 22 7H12L7 14z" fill="#de4637"/><path d="M2.500 6.500A11 11 0 0 0 11 23l5-8.500-9-1z" fill="#36a653"/><circle cx="12" cy="12" r="5.200" fill="#fff"/><circle cx="12" cy="12" r="4" fill="#4387f4"/></svg></span>
    <span class="tk run"><svg viewBox="0 0 24 24"><path d="M1 3h8l2 2h11v16H1z" fill="#e8a91f"/><path d="M1 7h21v13H1z" fill="#ffdc77"/><path d="M5 13h14v9h-4v-4H9v4H5z" fill="#2f91d6"/></svg></span>
    <span class="tk opera"><svg viewBox="0 0 24 24"><ellipse cx="12" cy="12" rx="11" ry="11" fill="#ef303b"/><ellipse cx="12.500" cy="12" rx="5.300" ry="8" fill="#a82425"/><path d="M12 1c-15 2-14 21 0 22-7-4-7-18 0-22" fill="#ff4e54" opacity=".5"/></svg></span>
    <span class="tk run"><svg viewBox="0 0 24 24"><path d="M1 9.500l2.500-2L17 18v6zM1 14.500l2.500 2L17 6V0z" fill="#22a6ed"/><path d="M17 0l6 3v18l-6 3z" fill="#2387ca"/></svg></span>
    <span class="tk"><svg viewBox="0 0 24 24"><path d="M2 2h19v21H2z" fill="#e9f2e5" stroke="#999"/><path d="M3 13h17v9H3z" fill="#73bf39"/><path d="M3 1v3M6 1v3M9 1v3M12 1v3M15 1v3M18 1v3" stroke="#777" stroke-width="1.500"/><path d="M5 15V8h3v7M10 11h3M15 11h3" fill="none" stroke="#222" stroke-width="1.500"/><path d="M23 2l-8 14-2 3 1-4 7-14z" fill="#e8b83e" stroke="#694a1a"/></svg></span>
    <span class="tk"><svg viewBox="0 0 24 24"><path d="M0 1h24v22H0z" fill="#b60b10"/><text x="2" y="19" class="fz">Fz</text></svg></span>
    <span class="tk run"><svg viewBox="0 0 24 24"><circle cx="12" cy="12" r="11.300" fill="#fff"/><path d="M12 4c-5 6-4 11 0 14 4-3 5-8 0-14" fill="#159653"/><path d="M12 4v16" stroke="#176b42"/></svg></span>
    <span class="tk"><svg viewBox="0 0 24 24"><path d="M1 1h22v22H1z" fill="#4c4b4b"/><path d="M6 8l12-4v4l-7 3 7 2v4L6 21v-4l7-3-7-2z" fill="#ff9c20"/></svg></span>
    <span class="tk"><svg viewBox="0 0 24 24"><rect x="2" y="2" width="20" height="20" rx="4" fill="#ffe51d"/><path d="M13 10v9M13 11l6 4-6 3M13 14h3" fill="none" stroke="#292600" stroke-width="1.600"/></svg></span>
    <span class="tk"><svg viewBox="0 0 24 24"><path d="M3 1l4 1 2 4 4 1 2-5 4 1 0 6 4 3 2 3-3 1-3-2-1 2 3 6-3 1-3-4-3 0-1 4-4-1 1-5-3 0-3 2-2-3 4-4-5-3 1-3 4 1z" fill="#a8171a" stroke="#5e0809"/><circle cx="5" cy="4" r="2" fill="#c8534e"/><text x="8" y="15" class="n64">64</text></svg></span>
    <span class="tk run"><svg viewBox="0 0 24 24"><ellipse cx="12" cy="9" rx="10.500" ry="7" transform="rotate(-14 12 9)" fill="#f4f4f4" stroke="#ca4d50" stroke-width="2"/><path d="M10 5l5 8M18 8L9 12" stroke="#8b949b" stroke-width="1.200"/><path d="M14 12l2 5M21 13l-4 3" stroke="#2984bc" stroke-width="1.500"/><circle cx="15" cy="20" r="2.700" fill="none" stroke="#2984bc" stroke-width="2"/><circle cx="20" cy="17" r="2.700" fill="none" stroke="#2984bc" stroke-width="2"/></svg></span>
    <span class="tk"><i class="rainbow"></i></span>
    <span class="tk run"><svg viewBox="0 0 24 24"><g transform="rotate(45 12 12)"><path d="M3 3h8v8H3z" fill="#e56c69"/><path d="M13 3h8v8h-8z" fill="#82bd64"/><path d="M3 13h8v8H3z" fill="#6e9bd8"/><path d="M13 13h8v8h-8z" fill="#f0d070"/></g><path d="M13 6v10M13 10l4 2" stroke="#282e2b" stroke-width="1.800"/><circle cx="13" cy="17" r="2"/></svg></span>
    <span class="tk cur"><svg class="xl" viewBox="0 0 16 16"><use href="#excel"/></svg></span>
    <svg class="tray" viewBox="0 0 100 24"><g fill="none" stroke="#f5f5f5" stroke-width="1.300"><path d="M3 15l6-6 6 6"/><path d="M30 9h11v7H30M41 11h2v3h-2"/><path d="M26 8.500h4v2c0 2-4 2-4 0M27 6v2M29 6v2M28 12v3h2"/><path d="M32 11h7v3h-7z" fill="#f5f5f5"/><path d="M48 10h3l4-4v12l-4-4h-3zM57 9c2 2 2 4 0 6M60 7c3 3 3 7 0 10"/><path d="M63 5c4 4 4 10 0 14" stroke="#777"/><path d="M79 18c-4 0-3-4 0-4h5c3-1 1-4-1-2l-4 7M82 14l6-9 2.500 1.500-7 10M88 13c4-3 6-1 3 3"/></g></svg>
    <span class="lang fit" data-w="19">ESP</span>
    <span class="clock"><span class="fit" data-w="27">13:01</span><span class="fit" data-w="58">10/12/2022</span></span>
    <svg class="note" viewBox="0 0 18 18"><path d="M1 2h15v11h-6l-2 3-2-3H1z" fill="none" stroke="#fff" stroke-width="1.300"/></svg>
    <i class="showdesk"></i>
  </footer>
</div>

<section class="dialog">
  <header class="dtitle"><span class="fit" data-w="76">Guardar como</span><b class="q">?</b><svg viewBox="0 0 12 12"><path d="M1 1l10 10M11 1L1 11" stroke="#111"/></svg></header>
  <div class="dlook">
    <span class="fit look" data-w="57">Guardar <u>e</u>n:</span>
    <div class="dcombo folder"><svg class="i16"><use href="#smallfolder"/></svg><span class="fit" data-w="80">MiTablaPeriodica</span><i class="dd"><svg viewBox="0 0 17 19"><path d="M4.500 8l4 4 4-4" fill="none" stroke="#555"/></svg></i></div>
    <svg class="di b1"><use href="#back"/></svg><i class="ar dim2"></i><svg class="di"><use href="#up"/></svg><i class="sep"></i><svg class="di g1"><use href="#websearch"/></svg><svg class="di g2"><use href="#delete"/></svg><svg class="di g2"><use href="#newfolder"/></svg><svg class="di g2"><use href="#views"/></svg><i class="ar v"></i><span class="fit" data-w="65"><u>H</u>erramientas</span><i class="ar h"></i>
  </div>
  <div class="dmain">
    <aside class="places">
      <div class="place p1"><svg class="s28" viewBox="0 0 28 28"><use href="#folder"/></svg><span class="fit" data-w="77">Mis documentos</span><span class="fit" data-w="44">recientes</span></div>
      <div class="place p2"><svg class="s20"><use href="#desktop"/></svg><span class="fit" data-w="44">Escritorio</span></div>
      <div class="place p3"><svg class="s32"><use href="#docs"/></svg><span class="fit" data-w="77">Mis documentos</span></div>
      <div class="place p4"><svg class="spc"><use href="#pc"/></svg><span class="fit" data-w="26">Mi PC</span></div>
      <div class="place p5"><svg class="snet"><use href="#net"/></svg><span class="fit" data-w="77">Mis sitios de red</span></div>
    </aside>
    <div class="dright">
      <div class="files">
        <div class="fhead"><span class="c1"><span class="fit" data-w="44">Nombre</span></span><span class="c2"><span class="fit" data-w="120">Fecha de modificación</span></span><span class="c3"><span class="fit" data-w="23">Tipo</span></span><span class="c3"><span class="fit" data-w="42">Tamaño</span></span></div>
        <div class="file"><svg class="i16"><use href="#csv"/></svg><span class="fit" data-w="102">TablaElementos.csv</span></div>
      </div>
      <div class="dform">
        <div class="labels"><span class="fit" data-w="94"><u>N</u>ombre de archivo:</span><span class="fit" data-w="92">Guardar como <u>t</u>ipo:</span></div>
        <div class="fields">
          <div class="dcombo"><span class="fit val" data-w="95">TablaElementos.csv</span><i class="dd"><svg viewBox="0 0 17 19"><path d="M4.500 8l4 4 4-4" fill="none" stroke="#555"/></svg></i></div>
          <div class="dcombo"><span class="sel"><span class="fit" data-w="168">CSV (delimitado por comas) (*.csv)</span></span><i class="dd"><svg viewBox="0 0 17 19"><path d="M4.500 8l4 4 4-4" fill="none" stroke="#555"/></svg></i></div>
        </div>
        <div class="btns"><span class="btn def"><span class="fit" data-w="39"><u>G</u>uardar</span></span><span class="btn"><span class="fit" data-w="42">Cancelar</span></span></div>
      </div>
    </div>
  </div>
  <svg class="dgrip" viewBox="0 0 10 10"><path d="M0 10L10 0M4 10l6-6M8 10l2-2" stroke="#888" stroke-width="1.400"/></svg>
</section>

<svg class="ink" viewBox="0 0 1366 779">
  <path d="M117 41C106 36 102 29 104 21C106 13 113 11 127 10C160 9 195 11 222 13C230 15 231 22 228 32M115 34.500C140 35 190 33 226 35"/>
  <path d="M253 17C264 16 263 31 274 36M281 14C270 19 261 27 251 33M293 26C304 20 311 11 308 5C303-2 296 9 294 18C290 31 293 38 302 38M329 15C320 12 309 13 311 19C313 24 325 22 327 29C328 38 321 44 307 41"/>
  <path d="M816 340L817 358C823 348 834 337 846 336M857 380C844 380 835 388 836 395C837 404 846 402 854 402M869 382C873 391 876 399 878 405C882 395 888 386 893 379M915 380C906 378 899 383 903 388C908 391 918 392 918 399C918 407 907 410 900 405"/>
  <path d="M815.500 399l1.500 2" class="dot"/>
  <path d="M783 643.500C765 643 749 643 737 638C730 632 732 618 735 604C738 590 744 581 757 575C775 567 798 565 828 565C863 567 910 570 937 577C945 583 955 581 965 587C979 590 987 592 985 603C984 611 981 617 974 620C962 631 945 632 917 631C899 634 884 639 866 638C838 635 798 632 783 633C774 633 769 634 769 636"/>
</svg>
<script src="sheet.js"></script>
</body>
</html>
```
FILE: styles.css
```css
*{box-sizing:border-box}
body{margin:0;width:1366px;height:779px;overflow:hidden;background:#fff;font:12px "Open Sans","Noto Sans",sans-serif;color:#000}
i,em,b{font-style:normal}
svg{display:block;flex:none}
.defs{position:absolute}
.fit{white-space:nowrap;flex:none;display:inline-block}
u{text-underline-offset:1px;text-decoration-thickness:1px}
.i16{width:16px;height:16px}
.window{display:flex;flex-direction:column;height:779px}
.titlebar{height:34px;display:flex;align-items:center;padding:10px 18px 0 2px;gap:5px;color:#969696;flex:none}
.winbtns{width:104px;height:14px;margin-left:auto;margin-top:-2px}
.menubar{height:27px;flex:none;display:flex;align-items:center;gap:16px;padding-left:4px;padding-right:7px;padding-bottom:2px;background:linear-gradient(90deg,#a0bff4,#c4d8f9 60%)}
.grip{width:2px;height:15px;flex:none;background:repeating-linear-gradient(#27468b 0 2px,transparent 2px 4px)}
.menubar .grip{margin-right:-12px}
.appicon{width:17px;height:16px;margin-right:-7px}
.ask{width:178px;height:20px;background:#fff;display:flex;align-items:center;margin-left:auto;padding:0 1px 0 4px;color:#888;margin-right:-9px}
.drop{width:11px;align-self:stretch;margin:1px 0 1px auto;background:linear-gradient(#dceafd,#a5c3ef);display:flex;align-items:center;justify-content:center;flex:none}
.drop:after,.ar:after{content:"";border:3px solid transparent;border-top-color:#000;border-bottom:0}
.mdi{width:46px;height:12px}
.bars{display:flex;height:26px;flex:none;background:linear-gradient(90deg,#a0bff4,#c4d8f9 60%)}
.bars + .bars{height:25px}
.toolbar{height:25px;display:flex;align-items:center;border-radius:3px;background:linear-gradient(#e1edfe,#c7dcfb 45%,#87aee8);border-bottom:1px solid #4066a3;flex:none;overflow:hidden}
.toolbar .grip{margin-right:-.5px}
.std{width:756px;margin-left:2px;padding-left:4px}
.fmt{width:606px;margin-left:2px;padding-left:4px}
.vb{width:239px;margin-left:2px;padding-left:4px}
.ctl{width:375px;margin-left:37px;padding-left:3px}
.ib{width:23.4px;height:22px;display:flex;align-items:center;justify-content:center;flex:none}
.ctl .ib{width:23.100px}
.ib svg{width:16px;height:16px;overflow:visible}
.ib.on{background:linear-gradient(#ffc98a,#fdab55);border:1px solid #10186c}
.sep{width:5px;height:17px;flex:none;background:linear-gradient(90deg,transparent 1px,#6a8ccb 1px 2px,#f1f7ff 2px 3px,transparent 3px)}
.ar{width:11px;display:flex;justify-content:center;flex:none}
.dim:after{border-top-color:#8394b6}
.abc{font:bold 6.500px "Liberation Sans",sans-serif}
.az{font:bold 9px "Liberation Sans",sans-serif}
.blue{fill:#2950a8}.red{fill:#aa3042}
.fc{font:bold 14px "Liberation Serif",serif;fill:#27518e}
.ab{font:bold 9px "Liberation Serif",serif;fill:#35496f}
.combo{height:20px;background:#fff;display:flex;align-items:center;padding:0 1px 2px 3px;flex:none}
.combo .drop{margin-bottom:-1px}
.zoom{width:67px}.face{width:152px;margin-left:2px}.size{width:46px;margin:0 2px}
.full{margin:0 2px 0 4px}
.more{width:11px;align-self:stretch;margin-left:auto;flex:none;background:linear-gradient(#7ba5ec,#063a94);border-radius:0 3px 3px 0;display:flex;flex-direction:column;justify-content:flex-end;align-items:center;gap:2px;padding-bottom:3px}
.more:before{content:"";width:5px;height:1px;background:#fff}
.more:after{content:"";border:3px solid transparent;border-top-color:#fff;border-bottom:0}
.ltr{font:bold 14px "Liberation Serif",serif;-webkit-text-stroke:.4px #000}
.it{font-style:italic}.un{text-decoration:underline}
.biga{font:20px "Liberation Serif",serif;color:#254d8e;-webkit-text-stroke:.4px #254d8e}
.seg{margin:0 4px 0 4px}
.vb .sep{width:4px}
.formula{height:18px;flex:none;display:flex;align-items:center;background:linear-gradient(90deg,#a0bff4,#afc9f6 170px,#fff 170px)}
.namebox{width:92px;margin-left:2px;height:18px;background:#fff;text-align:center;font:14px/17px "Liberation Sans",sans-serif;letter-spacing:-.5px}
.formula .ar{width:19px}
.fx{margin-left:42px;width:14px;font:italic bold 12px "Liberation Serif",serif;letter-spacing:-.5px}
.input{flex:1;background:#fff;height:18px}
.sheetarea{height:572px;flex:none;display:flex;border-top:1px solid #6f6f6f;overflow:hidden}
.sheet{width:1348px;border-left:2px solid #747474;overflow:hidden;font:16px "Liberation Sans",sans-serif}
.row{display:flex;height:20px}
.row.tall{height:21px}
.row.head{height:17px}
.c{flex:none;border-right:1px solid #c0c0c0;border-bottom:1px solid #c0c0c0;white-space:nowrap;line-height:22px;padding:0 3px}
.c.mid{text-align:center}
.c.bold{font-weight:bold}
.c.cI{letter-spacing:-.22px}
.c.bold.cI{letter-spacing:0}
.c.bold.cF{text-indent:-4px}
.rh.rh,.head .c{background:#efebde;border-color:#8e8b7c;text-align:center;font-size:14px;line-height:17px;padding:0;letter-spacing:0}
.rh.rh{width:26px;letter-spacing:-.5px;line-height:22px}
.row:not(.tall) .rh{line-height:21px}
.head .c.hot,.rh.rh.hot{background:#ffc06f;border-color:#26205c}
.cA,.cD{width:117px}.cB{width:82px}.cC{width:153px}.cE{width:94px}.cF{width:141px}.cG{width:140px}.cH{width:160px}.cI{width:241px}.cJ{width:116px}
.pick{outline:2px solid #000;outline-offset:-1px;position:relative;border-color:transparent}
.pick:after{content:"";position:absolute;right:-3px;bottom:-3px;width:4px;height:4px;background:#000;border:1px solid #fff;box-sizing:content-box;border-right:0;border-bottom:0}
.vscroll{width:17px;background:#f0f0f0;display:flex;flex-direction:column}
.split{height:8px;border-bottom:2px solid #222;border-top:1px solid #fff;flex:none}
.sb{width:17px;height:17px}
.thumb{height:491px;background:#cdcdcd;flex:none}
.last{margin-top:auto}
.tabs{height:18px;flex:none;background:#f0f0f0;border-top:1px solid #999;border-bottom:1px solid #ddd;display:flex;padding-left:2px}
.nav{width:64px;height:16px}
.tab{width:58px;display:grid;justify-items:start}
.tab>*{grid-area:1/1}
.tab svg{width:58px;height:16px}
.tab b{font-size:12px;line-height:16px;margin-left:10px}
.hscroll{width:531px;margin-left:691px;border-left:3px double #000;border-right:2px solid #000;display:flex}
.hscroll svg{width:16px;height:16px}
.hthumb{width:380px;background:#cdcdcd;margin-left:1px}
.hend{margin-left:auto;margin-right:4px}
.grab{width:16px;height:16px}
.status{height:19px;flex:none;background:#f0f0f0;display:flex;align-items:center;padding:3px 3px 0 4px;justify-content:space-between}
.panes{display:flex;gap:1px;height:15px;margin-top:-1px}
.panes i{border:1px solid #d0d0d0}
.p34{width:34px}.p112{width:112px}.p25{width:25px}.p38{width:38px}.p26{width:26px}.p29{width:29px}.p21{width:21px}.p27{width:27px}
.taskbar{height:40px;flex:none;display:flex;align-items:center;color:#fff;background:linear-gradient(90deg,#1e1e1e 0,#202020 270px,#3a352b 400px,#433d30 600px,#3d362d 750px,#413a2f 900px,#3b352a 1060px,#1b1b1b 1110px)}
.start{width:50px;padding-left:16px}
.start svg{width:16px;height:16px}
.tk{width:44px;height:40px;display:flex;align-items:center;justify-content:center;flex:none;position:relative}
.tk svg{width:24px;height:24px}
.tk svg.xl{width:20px;height:20px}
.run{background:linear-gradient(#76b9ed,#76b9ed) center bottom/35px 2px no-repeat}
.cur{background:linear-gradient(#76b9ed,#76b9ed) bottom/100% 2px no-repeat,#69665d}
.opera{background:linear-gradient(#ff0008,#ff0008) center bottom/35px 2px no-repeat,linear-gradient(#b02626,#b02626) center/35px 40px no-repeat}
.fz{font:italic bold 17px "Liberation Sans",sans-serif;fill:#fff;letter-spacing:-1.500px}
.n64{font:bold 7px "Liberation Sans",sans-serif;fill:#ffe28e}
.rainbow{width:24px;height:24px;border:solid #111;border-width:3px 0;background:linear-gradient(115deg,#d22,#ff9d00 25%,#f7f122 42%,#33ba45 60%,#11a7e2 75%,#313ac5)}
.tray{width:100px;height:24px;margin-left:6px}
.lang{margin-left:9px}
.clock{width:60px;margin-left:10px;display:flex;flex-direction:column;align-items:center;line-height:18px}
.note{width:18px;height:18px;margin-left:15px;margin-top:2px}
.showdesk{width:1px;height:40px;background:#666;margin-left:18px}

.dialog{position:absolute;left:581px;top:238px;width:637px;height:391px;border:1px solid #747474;background:#f0f0f0;box-shadow:0 3px 13px 2px rgba(0,0,0,.38);font-size:11.300px;display:flex;flex-direction:column}
.dtitle{height:31px;flex:none;background:#fff;display:flex;align-items:center;padding:0 18px 2px 8px;font-size:12px}
.q{font-weight:400;margin-left:auto;margin-right:35px;font-size:14px}
.dtitle svg{width:11px;height:11px}
.dlook{height:26px;flex:none;display:flex;align-items:center;padding-left:24px}
.look{margin-right:17px}
.dcombo{height:22px;border:1px solid #999;background:#fff;display:flex;align-items:center;flex:none}
.dcombo.folder{width:254px;padding-left:4px;gap:5px}
.dd{width:18px;align-self:stretch;background:#e3e3e3;border:1px solid #adadad;margin:0 0 0 auto;display:flex;flex:none}
.dd svg{width:16px;height:18px}
.di{width:16px;height:16px}
.b1{margin-left:5px;margin-right:6px}
.dim2:after{border-top-color:#555}
.dlook .sep{margin-left:5px}.g1{margin-left:3px}.g2{margin-left:7px}.v{margin-left:6px}.h{margin-left:8px}
.dmain{flex:1;display:flex;padding-left:5px}
.places{width:87px;height:327px;border:1px solid #828790;margin-top:1px;display:flex;flex-direction:column;align-items:center}
.place{display:flex;flex-direction:column;align-items:center;line-height:13px;flex:none;padding-right:2px}
.p1{height:78px;padding-top:6px}.p1 svg{margin-bottom:1px}
.p2{height:60px;padding-top:3px}.p2 svg{margin-bottom:6px}
.p3{height:68px;padding-top:1px}.p3 svg{margin-bottom:1px}.p4{height:66px;padding-top:1px}.p5{padding-top:1px}
.s28{width:28px;height:28px}.s20{width:28px;height:20px}.s32{width:28px;height:32px}.spc{width:32px;height:28px}.snet{width:30px;height:28px}
.p4 svg{margin-bottom:2px}.p5 svg{margin-bottom:1px}
.dright{padding-left:4px;flex:1}
.files{width:535px;height:279px;background:#fff;font-size:12px}
.fhead{display:flex;height:25px;align-items:center}
.fhead>span{height:25px;border-right:1px solid #e5e5e5;padding:4px 0 0 6px}
.c1{width:80px}.c2{width:149px}.c3{width:80px}
.file{display:flex;align-items:center;gap:2px;padding:5px 0 0 4px}
.dform{display:flex;margin-top:3px}
.labels{width:101px;padding-left:1px;display:flex;flex-direction:column;gap:9px;line-height:17px}
.labels>span{align-self:flex-start}
.fields{width:312px;display:flex;flex-direction:column;gap:2px}
.val{margin-left:1px;margin-top:-1px}
.sel{background:#0078d7;color:#fff;width:291px;height:14px;line-height:13px;margin-left:1px;padding-left:1px;outline:1px dotted #dba15a;outline-offset:-1px}
.btns{margin-left:22px;display:flex;flex-direction:column;gap:3px}
.btn{width:97px;height:21px;border:1px solid #adadad;background:#e1e1e1;display:flex;align-items:center;justify-content:center;padding-right:2px}
.btn.def{border:2px solid #0078d7;height:22px}
.dgrip{position:absolute;right:0;bottom:0;width:10px;height:10px}
.ink{position:absolute;left:0;top:0;width:1366px;height:779px;pointer-events:none;fill:none;stroke:#ea0a12;stroke-width:2.700;stroke-linecap:round;stroke-linejoin:round}
.ink .dot{stroke-width:3}
```
FILE: sheet.js
```js
const cols = "ABCDEFGHIJ".split("");
const data = [
  ["nombre","simbolo","numero_atomico","peso_atomico","estado","densidad_gcm3","tempFusion_K","tempEbullicion_K","usos"],
  ["Hidrogeno","H","1","1,00790","gas","0,0899","20","14","Energía, explosiones, propulsión"],
  ["Helio","He","2","4,00260","gas","0,1787","4","1","Globos"],
  ["Litio","Li","3","6,94100","sol","","","","Baterías"],
  ["Berilio","Be","4","9,01218","sol"],
  ["Boro","B","5","10,81000","sol"],
  ["Carbono","C","6","12,01100","sol"],
  ["Nitrogeno","N","7","","gas"],
  ["Oxigeno","O","8","","gas"],
  ["Fluor","F","9","","gas"],
  ["Neon","Ne","10","","gas"]
];
let html = '<div class="row head"><div class="c rh"></div>' +
  cols.map(c => `<div class="c c${c}${c === "C" ? " hot" : ""}">${c}</div>`).join("") + "</div>";
for (let r = 1; r <= 28; r++) {
  html += `<div class="row${r <= 11 ? " tall" : ""}"><div class="c rh${r === 13 ? " hot" : ""}">${r < 28 ? r : ""}</div>`;
  cols.forEach((c, i) => {
    const bold = r === 1 || i < 2 ? " bold" : "";
    const mid = i > 1 && i < 8 ? " mid" : "";
    const pick = r === 13 && c === "C" ? " pick" : "";
    html += `<div class="c c${c}${bold}${mid}${pick}">${(data[r - 1] || [])[i] || ""}</div>`;
  });
  html += "</div>";
}
document.getElementById("sheet").innerHTML = html;

// Spread each label over the width reserved for it.
document.querySelectorAll(".fit").forEach(el => {
  const target = Number(el.dataset.w);
  const natural = el.getBoundingClientRect().width;
  el.style.letterSpacing = (target - natural) / el.textContent.length + "px";
});
```
